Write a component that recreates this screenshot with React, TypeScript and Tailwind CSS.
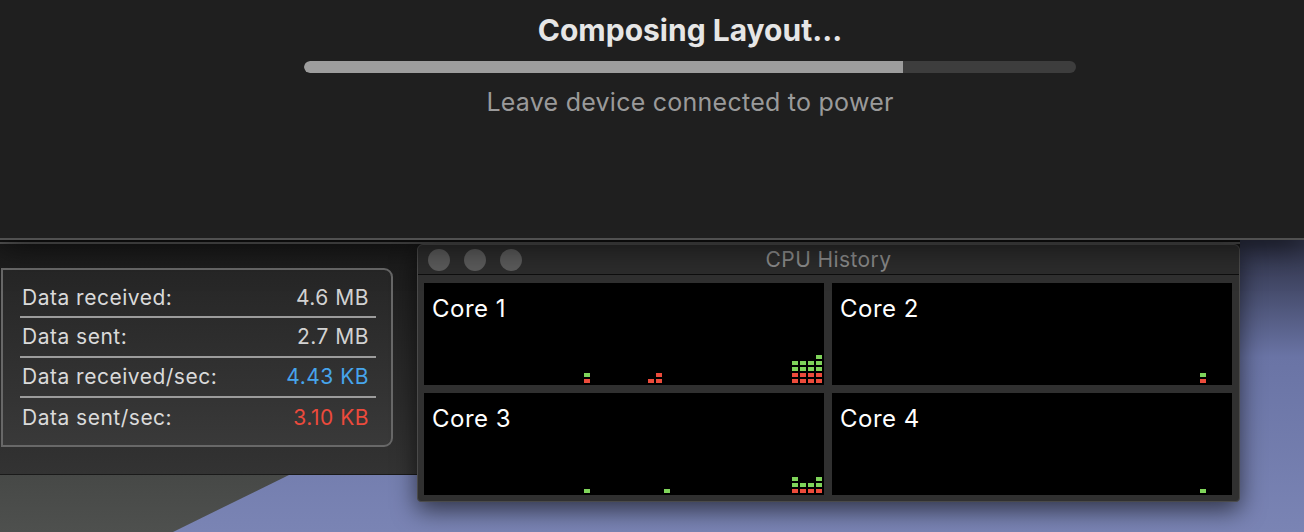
import React from "react";

// ── data ──────────────────────────────
type Cell = "r" | "g";
type Core = { name: string; cols: Record<number, string> };

const CORES: Core[] = [
  { name: "Core 1", cols: { 20: "rg", 28: "r", 29: "rr", 46: "rrgg", 47: "rrgg", 48: "rrgg", 49: "rrggg" } },
  { name: "Core 2", cols: { 46: "rg" } },
  { name: "Core 3", cols: { 20: "g", 30: "g", 46: "rgg", 47: "rg", 48: "rg", 49: "rgg" } },
  { name: "Core 4", cols: { 46: "g" } },
];

const ROWS = [
  { label: "Data received:", value: "4.6 MB", tone: "text-[#d2d2d2]" },
  { label: "Data sent:", value: "2.7 MB", tone: "text-[#d2d2d2]" },
  { label: "Data received/sec:", value: "4.43 KB", tone: "text-[#47a5ec]" },
  { label: "Data sent/sec:", value: "3.10 KB", tone: "text-[#ec4a3c]" },
];

const FONT = "font-['Inter','Liberation_Sans',sans-serif]";

// ── core graph ────────────────────────
function CorePanel({ core }: { core: Core }) {
  const cols = Array.from({ length: 50 }, (_, i) => core.cols[i] ?? "");
  return (
    <div className="flex h-[102px] flex-col justify-between bg-black pb-[2px]">
      <div className="pl-[8px] pt-[12px] text-[24px] leading-[28px] tracking-[0.5px] text-white">{core.name}</div>
      <div className="flex items-end gap-[2px]">
        {cols.map((c, i) => (
          <div key={i} className="flex w-[6px] flex-col-reverse gap-[2px]">
            {c.split("").map((k, j) => (
              <div
                key={j}
                className={(k as Cell) === "r" ? "h-[4px] bg-[#ec4b3b]" : "h-[4px] bg-[#7fd45a]"}
              />
            ))}
          </div>
        ))}
      </div>
    </div>
  );
}

function CpuWindow() {
  return (
    <div className="absolute left-[417px] top-[4px] w-[823px] rounded-t-[6px] rounded-b-[4px] border border-[#4a4a4a] bg-[#303030] shadow-[0_8px_24px_rgba(0,0,0,0.6)]">
      {/* title bar */}
      <div className="grid h-[30px] grid-cols-[1fr_auto_1fr] items-center rounded-t-[6px] border-b border-[#0e0e0e] bg-[#2c2c2c]">
        <div className="flex gap-[14px] pl-[10px]">
          <span className="h-[22px] w-[22px] rounded-full bg-[#5b5b5b]" />
          <span className="h-[22px] w-[22px] rounded-full bg-[#5b5b5b]" />
          <span className="h-[22px] w-[22px] rounded-full bg-[#5b5b5b]" />
        </div>
        <div className="text-[21px] leading-[28px] tracking-[0.4px] text-[#8a8a8a]">CPU History</div>
        <div />
      </div>
      <div className="grid grid-cols-2 gap-[8px] pb-[6px] pl-[6px] pr-[7px] pt-[8px]">
        {CORES.map((c) => (
          <CorePanel key={c.name} core={c} />
        ))}
      </div>
    </div>
  );
}

function NetworkWindow() {
  return (
    <div className="absolute left-0 top-0 flex h-[235px] w-[1240px] flex-col border-t-2 border-[#131313]">
      <div className="h-[2px] bg-[#585858]" />
      <div className="flex-1 border-b border-[#1a1a1a] bg-gradient-to-b from-[#1b1b1b] to-[#333333] pt-[24px]">
        <div className="ml-[1px] w-[392px] rounded-r-[9px] border-2 border-[#686868] bg-gradient-to-b from-[#262626] to-[#393939] pb-[7px] pl-[17px] pr-[15px] pt-[10px]">
          <div className="divide-y-2 divide-[#9c9c9c]">
            {ROWS.map((r) => (
              <div
                key={r.label}
                className="flex h-[40px] items-center justify-between pl-[2px] pr-[7px] text-[21px] tracking-[0.5px] first:h-[38px]"
              >
                <span className="text-[#dadada]">{r.label}</span>
                <span className={r.tone}>{r.value}</span>
              </div>
            ))}
          </div>
        </div>
      </div>
    </div>
  );
}

export default function App() {
  return (
    <div className={`relative h-[532px] w-[1304px] overflow-hidden ${FONT}`}>
      {/* 進行状況シート */}
      <div className="relative z-10 flex h-[240px] flex-col items-center border-b-2 border-[#505050] bg-[#1f1f1f] pl-[76px] pt-[11px] shadow-[0_6px_30px_rgba(0,0,0,0.6)]">
        <div className="text-[30px] font-bold leading-[38px] text-[#e6e6e6]">Composing Layout...</div>
        <div className="mt-[12px] h-[12px] w-[772px] overflow-hidden rounded-full bg-[#3d3d3d]">
          <div className="h-full w-[599px] rounded-l-full bg-[#9d9d9d]" />
        </div>
        <div className="mt-[13px] text-[25px] leading-[32px] tracking-[0.25px] text-[#9a9a9a]">
          Leave device connected to power
        </div>
      </div>

      {/* デスクトップ */}
      <div className="relative h-[292px] bg-gradient-to-b from-[#30344a] from-[2%] via-[#6a74a5] via-[40%] to-[#7a84b4]">
        <svg className="absolute inset-0" width="1304" height="292">
          <defs>
            <linearGradient id="wedge" x1="0" y1="0" x2="0" y2="1">
              <stop offset="0" stopColor="#424442" />
              <stop offset="1" stopColor="#4e504e" />
            </linearGradient>
          </defs>
          <polygon points="0,200 360,200 173,292 0,292" fill="url(#wedge)" />
        </svg>
        <NetworkWindow />
        <CpuWindow />
      </div>
    </div>
  );
}
